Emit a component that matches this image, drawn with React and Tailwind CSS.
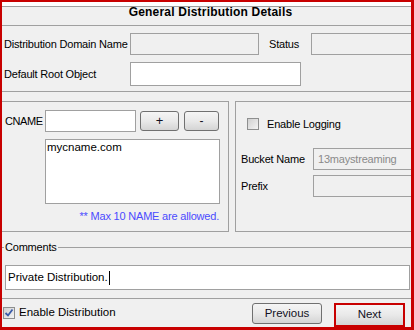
import React from 'react';

function Btn({ children, className = '' }) {
  return (
    <div
      className={`flex items-center justify-center rounded-[3px] border border-[#707070] bg-linear-to-b from-[#f5f5f5] via-[#e9e9e9] to-[#d4d4d4] text-[#111122] ${className}`}
    >
      {children}
    </div>
  );
}

function Box({ checked }) {
  return (
    <div className="flex items-center justify-center w-[12px] h-[12px] border border-[#8e8f8f] bg-white">
      <div className="flex items-center justify-center w-[10px] h-[10px] bg-linear-to-br from-[#d0d0d0] to-[#f4f4f4]">
        {checked && (
          <svg width="10" height="10" viewBox="0 0 10 10">
            <path d="M1.5 5 L4 7.5 L8.5 1.5" fill="none" stroke="#3a5ba8" strokeWidth="1.8" />
          </svg>
        )}
      </div>
    </div>
  );
}

export default function App() {
  return (
    <div
      className="w-[414px] h-[330px] bg-[#f0f0f0] border-l-2 border-t-2 border-r-[3px] border-b-[3px] border-[#c80000] flex flex-col text-[11px] tracking-[-0.2px] text-black overflow-hidden"
      style={{ fontFamily: '"Liberation Sans", Arial, sans-serif' }}
    >
      <div className="h-[4px] bg-white" />
      <div className="h-px bg-[#a0a0a0]" />
      <div className="h-[18px] text-center font-bold text-[12px] leading-[11px] tracking-[0.2px] pl-[8px]">
        General Distribution Details
      </div>
      <div className="h-px bg-[#a0a0a0]" />

      {/* top rows */}
      <div className="flex items-center h-[22px] mt-[7px]">
        <div className="w-[128px] pl-[2px]">Distribution Domain Name</div>
        <div className="w-[129px] h-full border border-[#a0a0a0]" />
        <div className="w-[42px] ml-[10px]">Status</div>
        <div className="flex-1 h-full border border-r-0 border-[#a0a0a0]" />
      </div>
      <div className="flex items-center h-[24px] mt-[7px]">
        <div className="w-[128px] pl-[2px]">Default Root Object</div>
        <div className="w-[171px] h-full border border-[#a0a0a0] bg-white" />
      </div>
      <div className="h-px bg-[#a0a0a0] mt-[5px]" />

      {/* panels */}
      <div className="flex h-[131px] mt-[9px] gap-[6px]">
        <div className="w-[227px] border border-l-0 border-[#a0a0a0] flex flex-col pt-[8px]">
          <div className="flex items-center h-[22px]">
            <div className="w-[43px] pl-[3px] tracking-[-0.4px]">CNAME</div>
            <div className="w-[91px] h-full border border-[#a0a0a0] bg-white" />
            <Btn className="w-[39px] h-[20px] ml-[4px] text-[13px]">+</Btn>
            <Btn className="w-[35px] h-[20px] ml-[5px] text-[12px]">-</Btn>
          </div>
          <div className="ml-[43px] mt-[7px] w-[175px] h-[65px] border border-[#a0a0a0] bg-white px-[1px] leading-[14px] tracking-normal text-[11.5px]">
            mycname.com
          </div>
          <div className="ml-[43px] w-[175px] mt-[6px] text-right pr-[1px] leading-[12px] text-[#4b4bff]">
            ** Max 10 NAME are allowed.
          </div>
        </div>
        <div className="flex-1 border border-r-0 border-[#a0a0a0] flex flex-col pt-[16px]">
          <div className="flex items-center h-[12px] pl-[11px]">
            <Box />
            <div className="ml-[8px]">Enable Logging</div>
          </div>
          <div className="flex items-center h-[22px] mt-[18px] pl-[5px]">
            <div className="w-[72px]">Bucket Name</div>
            <div className="flex-1 h-full border border-r-0 border-[#a0a0a0] flex items-center pl-[4px] text-[#8a8a8a]">
              13maystreaming
            </div>
          </div>
          <div className="flex items-center h-[22px] mt-[5px] pl-[5px]">
            <div className="w-[72px]">Prefix</div>
            <div className="flex-1 h-full border border-r-0 border-[#a0a0a0]" />
          </div>
        </div>
      </div>

      {/* comments */}
      <div className="flex items-center h-[12px] mt-[9px]">
        <div className="w-[2px] h-px bg-[#a0a0a0]" />
        <div className="px-[1px]">Comments</div>
        <div className="flex-1 h-px bg-[#a0a0a0]" />
      </div>
      <div className="h-[25px] mt-[12px] ml-[3px] mr-[1px] border border-[#a0a0a0] bg-white flex items-center pl-[2px] text-[11.5px] tracking-normal">
        <span>Private Distribution.</span>
        <span className="w-px h-[14px] bg-black ml-[1px]" />
      </div>
      <div className="h-px bg-[#a0a0a0] mt-[8px]" />

      {/* bottom */}
      <div className="flex items-center h-[28px] pl-[1px]">
        <Box checked />
        <div className="ml-[4px] text-[11.5px] tracking-normal">Enable Distribution</div>
        <div className="flex-1" />
        <Btn className="w-[70px] h-[21px] mt-[1px] text-[11.5px] tracking-normal">Previous</Btn>
        <div className="ml-[12px] mr-[6px] mt-[3px] w-[71px] h-[24px] border-2 border-[#c80000] bg-linear-to-b from-[#f5f5f5] via-[#e9e9e9] to-[#d4d4d4] flex items-center justify-center text-[11.5px] tracking-normal text-[#111122]">
          Next
        </div>
      </div>
    </div>
  );
}
